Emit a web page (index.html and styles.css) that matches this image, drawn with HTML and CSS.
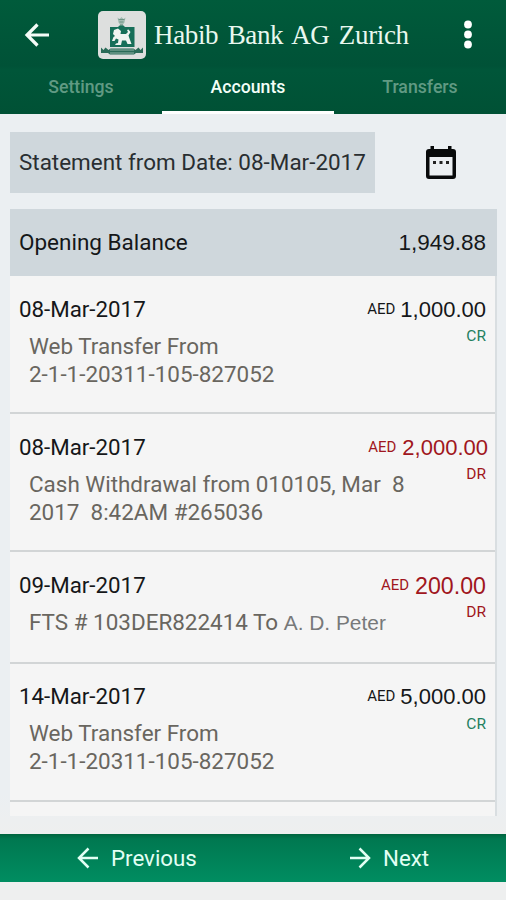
FILE: index.html
```html
<!DOCTYPE html>
<html lang="en">
<head>
  <meta charset="UTF-8" />
  <meta name="viewport" content="width=device-width, initial-scale=1.0"/>
  <title>Habib Bank AG Zurich</title>
  <link rel="stylesheet" href="styles.css">
</head>
<body>

  <header class="header">
    <div class="topbar">
      <svg class="back" width="26" height="26" viewBox="0 0 26 26">
        <path d="M25 13H3M13.500 2.500L3 13l10.500 10.500" fill="none" stroke="#f4fbf7" stroke-width="3.200"/>
      </svg>
      <svg class="logo" width="48" height="48" viewBox="0 0 48 48">
        <rect width="48" height="48" rx="5" fill="#dddfde"/>
        <path d="M19.500 6.500l2 1.500 2-2 2 2 2-1.500-1 5-1.500 2v4h-3v-4l-1.500-2z" fill="#a3bcb3"/>
        <path d="M20.500 8.500h6M21.500 11h4M22 14h3" stroke="#6f9485"/>
        <path d="M12 16h8l1.500-1.500h4L27 16h9.500v20H12z" fill="#176f59"/>
        <path d="M16 19l4-1.500 3 2.500-.5 3H28l2-2-1-2 1.500-.5 2 2.500-2 3.500 1 3 2 5.500h-4l-1.500-3.500h-4L23 34h-6l1-1.500 2-.5.500-3.500-2.500-1-1.500 2.500H14l1.500-4 1.500-1-2-2z" fill="#f1f5f2"/>
        <path d="M3 36.500l2.500 2.500 2-2.500 3 2.500 2-1.500h23l2 1.500 3-2.500 2 2.500 2.500-2.500V42H38l-2 1.500H12L10 42H3z" fill="#2a6b58"/>
        <path d="M12 39h24M12 42h24" stroke="#a9c6bb" stroke-width=".8"/>
      </svg>
      <h1 class="title">Habib Bank AG Zurich</h1>
      <svg class="more" width="8" height="30" viewBox="0 0 8 30" fill="#fff">
        <circle cx="4" cy="4.500" r="3.900"/>
        <circle cx="4" cy="14.500" r="3.900"/>
        <circle cx="4" cy="24.500" r="3.900"/>
      </svg>
    </div>
    <nav class="tabs">
      <a class="tab">Settings</a>
      <a class="tab active">Accounts</a>
      <a class="tab">Transfers</a>
    </nav>
  </header>

  <main class="content">
    <div class="filter">
      <div class="filter-date">Statement from Date: 08-Mar-2017</div>
      <svg class="calendar" width="32" height="36" viewBox="0 0 32 36">
        <path d="M5.500 1H9v3h14V1h3.500v3H28a3 3 0 0 1 3 3v24a3 3 0 0 1-3 3H4a3 3 0 0 1-3-3V7a3 3 0 0 1 3-3h1.500zM4.500 12v18.500h23V12z" fill="#080a0b" fill-rule="evenodd"/>
        <path d="M8 16h3v3H8zM14.500 16h3v3h-3zM21 16h3v3h-3z" fill="#222"/>
      </svg>
    </div>

    <div class="statement">
      <div class="opening">
        <span>Opening Balance</span>
        <span class="value">1,949.88</span>
      </div>
      <div class="entry">
        <div class="date">08-Mar-2017</div>
        <div class="amount"><small>AED</small><span class="value">1,000.00</span></div>
        <div class="type credit">CR</div>
        <p class="details">Web Transfer From
2-1-1-20311-105-827052</p>
      </div>
      <div class="entry">
        <div class="date">08-Mar-2017</div>
        <div class="amount debit wide"><small>AED</small><span class="value">2,000.00</span></div>
        <div class="type debit">DR</div>
        <p class="details">Cash Withdrawal from 010105, Mar  8
2017  8:42AM #265036</p>
      </div>
      <div class="entry">
        <div class="date">09-Mar-2017</div>
        <div class="amount debit short"><small>AED</small><span class="value">200.00</span></div>
        <div class="type debit">DR</div>
        <p class="details">FTS # 103DER822414 To <span class="payee">A. D. Peter</span></p>
      </div>
      <div class="entry">
        <div class="date">14-Mar-2017</div>
        <div class="amount"><small>AED</small><span class="value">5,000.00</span></div>
        <div class="type credit">CR</div>
        <p class="details">Web Transfer From
2-1-1-20311-105-827052</p>
      </div>
    </div>
  </main>

  <footer class="pager">
    <a class="page-link">
      <svg width="22" height="22" viewBox="0 0 22 22">
        <path d="M21 11H2M11.500 1.500L2 11l9.500 9.500" fill="none" stroke="#e2fff4" stroke-width="2.500"/>
      </svg>
      <span>Previous</span>
    </a>
    <a class="page-link">
      <svg width="22" height="22" viewBox="0 0 22 22">
        <path d="M1 11h19M10.500 1.500L20 11l-9.500 9.500" fill="none" stroke="#e2fff4" stroke-width="2.500"/>
      </svg>
      <span>Next</span>
    </a>
  </footer>

</body>
</html>
```
FILE: styles.css
```css
* {
  box-sizing: border-box;
}

body {
  margin: 0;
  height: 900px;
  display: flex;
  flex-direction: column;
  overflow: hidden;
  font-family: Roboto, sans-serif;
  background: #eeefef;
  color: #151719;
}

.header {
  height: 114px;
  background: linear-gradient(#005b3b, #005237 66px, #005639 70px, #005135);
}

.topbar {
  display: flex;
  align-items: center;
  height: 70px;
  padding: 0 34px 0 24px;
}

.logo {
  margin-left: 48px;
}

.title {
  margin: 0 0 0 8px;
  font: 27px "Liberation Serif", serif;
  letter-spacing: -0.35px;
  word-spacing: 3px;
  white-space: nowrap;
  color: #e9f8ef;
}

.more {
  margin-left: auto;
}

.tabs {
  display: grid;
  grid-template-columns: 162px 172px 172px;
  height: 44px;
}

.tab {
  padding-top: 6px;
  font-size: 17.7px;
  font-weight: 500;
  line-height: 22px;
  text-align: center;
  color: #609a83;
  border-bottom: 3px solid transparent;
}

.tab.active {
  color: #f3fff8;
  border-bottom-color: #fff;
}

.content {
  height: 720px;
  padding: 18px 9px 18px 10px;
  background: linear-gradient(#ebeff2 680px, #eeefef);
}

.filter {
  display: flex;
  align-items: center;
  height: 61px;
  margin-bottom: 16px;
}

.filter-date {
  width: 365px;
  height: 61px;
  padding-left: 9px;
  font-size: 22.45px;
  line-height: 61px;
  white-space: nowrap;
  background: #cfd7dc;
  color: #292e31;
}

.calendar {
  margin-left: 50px;
}

.statement {
  height: 607px;
  overflow: hidden;
  background: linear-gradient(to right, #f5f5f5 485px, #d9dee1 485px);
}

.opening {
  display: flex;
  justify-content: space-between;
  height: 67px;
  padding: 0 11px 0 9px;
  font-size: 22.5px;
  line-height: 67px;
  background: #cfd7dc;
}

.value {
  font-family: "Liberation Sans", Arial, sans-serif;
  font-size: 22.5px;
}

.entry {
  display: grid;
  grid-template-columns: 1fr auto;
  grid-template-rows: 47px auto;
  margin-right: 2px;
  padding: 19.7px 9px 24.5px;
  border-bottom: 2px solid #d2d5d6;
  position: relative;
}

.date {
  font-size: 22.3px;
  line-height: 26px;
}

.amount {
  display: flex;
  height: 28px;
  line-height: 28px;
}

.amount small {
  margin-right: 5px;
  font-size: 15px;
  line-height: 26px;
}

.amount .value {
  font-size: 22px;
}

.wide {
  margin-right: -2px;
}

.wide small {
  margin-right: 6px;
}

.short small {
  margin-right: 6px;
}

.short .value {
  font-size: 23.2px;
}

/* sits beside the first line of the details */
.type {
  position: absolute;
  top: 51px;
  right: 9px;
  font-size: 15.5px;
  line-height: 18px;
}

.credit {
  color: #23805f;
}

.debit {
  color: #a01620;
}

.details {
  grid-column: 1 / 3;
  margin: -11px 0 0 10px;
  font-size: 22.45px;
  line-height: 28px;
  white-space: pre;
  color: #69665f;
}

.payee {
  font-family: "Liberation Sans", Arial, sans-serif;
  font-size: 20.9px;
  color: #77797a;
}

.pager {
  display: grid;
  grid-template-columns: 272px 1fr;
  height: 48px;
  background: linear-gradient(#00643f, #007850 5px, #008d61);
}

.page-link {
  display: flex;
  align-items: center;
  gap: 12px;
  padding-left: 77px;
  font-size: 22.3px;
  color: #e2fff4;
}
```
